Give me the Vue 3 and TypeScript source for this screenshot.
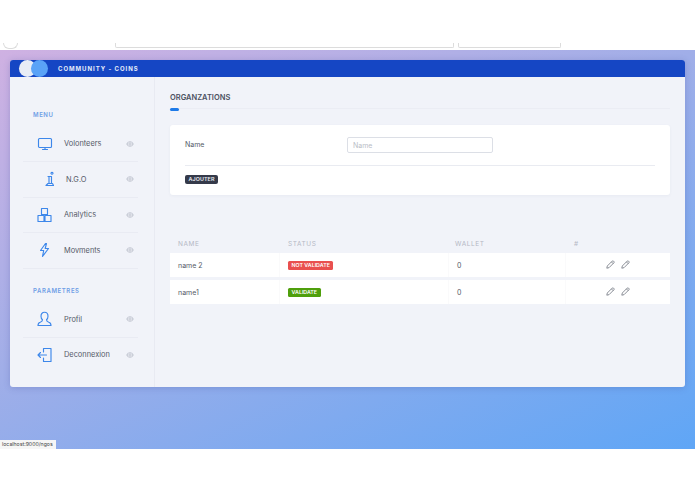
<template>
  <div class="page">
    <div class="chrome">
      <span class="round"></span>
      <span class="url"></span>
      <span class="tab"></span>
    </div>

    <div class="stage">
      <div class="panel">
        <header class="topbar">
          <span class="dot light"></span>
          <span class="dot blue"></span>
          <span class="brand">COMMUNITY - COINS</span>
        </header>

        <div class="body">
          <aside class="side">
            <div class="group first">MENU</div>
            <div class="item" v-for="it in menu" :key="it.label" :class="{ shifted: it.shifted }">
              <svg class="ico" width="18" height="16" viewBox="0 0 18 16"><path :d="it.d" /></svg>
              <span class="label">{{ it.label }}</span>
              <svg class="eye" width="8" height="6" viewBox="0 0 8 6">
                <ellipse cx="4" cy="3" rx="3" ry="2.3" />
                <path d="M.5 3h7M4 .7v4.6" />
              </svg>
            </div>
            <div class="group">PARAMETRES</div>
            <div class="item" v-for="it in settings" :key="it.label">
              <svg class="ico" width="18" height="16" viewBox="0 0 18 16"><path :d="it.d" /></svg>
              <span class="label">{{ it.label }}</span>
              <svg class="eye" width="8" height="6" viewBox="0 0 8 6">
                <ellipse cx="4" cy="3" rx="3" ry="2.3" />
                <path d="M.5 3h7M4 .7v4.6" />
              </svg>
            </div>
          </aside>

          <main class="main">
            <h2 class="title">ORGANZATIONS</h2>
            <div class="rule"><span class="accent"></span></div>

            <section class="card">
              <div class="field">
                <label class="field-name">Name</label>
                <input class="input" type="text" placeholder="Name" />
              </div>
              <div class="actions">
                <button class="add" type="button">AJOUTER</button>
              </div>
            </section>

            <div class="thead">
              <span>NAME</span>
              <span>STATUS</span>
              <span class="wallet-head">WALLET</span>
              <span>#</span>
            </div>
            <div class="row" v-for="org in orgs" :key="org.name">
              <div class="cell">{{ org.name }}</div>
              <div class="cell">
                <span class="badge" :class="org.ok ? 'ok' : 'ko'">{{ org.status }}</span>
              </div>
              <div class="cell">{{ org.wallet }}</div>
              <div class="cell tools">
                <svg v-for="n in 2" :key="n" width="9" height="9" viewBox="0 0 9 9">
                  <path d="M.8 8.2l.5-2.2L6.2 1.1c.4-.4 1-.4 1.3 0l.4.4c.4.4.4.9 0 1.3L3 7.7zM5.4 1.9l1.700 1.700" />
                </svg>
              </div>
            </div>
          </main>
        </div>
      </div>
      <div class="status">localhost:9000/ngos</div>
    </div>

    <div class="foot"></div>
  </div>
</template>

<script setup lang="ts">
interface NavItem {
  label: string;
  d: string;
  shifted?: boolean;
}

interface Org {
  name: string;
  status: string;
  ok: boolean;
  wallet: number;
}

const menu: NavItem[] = [
  { label: 'Volonteers', d: 'M2.500 2.500h11a1 1 0 0 1 1 1v7a1 1 0 0 1-1 1h-11a1 1 0 0 1-1-1v-7a1 1 0 0 1 1-1zM8 11.500v2M5.500 13.500h5' },
  {
    label: 'N.G.O',
    shifted: true,
    d: 'M15 1.300a1 1 0 1 1-.01 0zM11 5.500h3.500v7M12 6v6.500M11 12.500h4.500l1 2h-7.500z'
  },
  { label: 'Analytics', d: 'M4.500 1.500h6v6h-6zM1 8.500h6v6H1zM8 8.500h6v6H8z' },
  { label: 'Movments', d: 'M8.500 1.500L3.500 8.500h3.200L5.500 14.500l6-8H8.200L9.500 1.500z' }
];

const settings: NavItem[] = [
  {
    label: 'Profil',
    d: 'M7.500 1.200c2 0 3.500 1.700 3.500 4 0 1.500-.6 2.800-1.500 3.600 0 1.500.8 2 2.300 2.500 1.500.4 2.200 1.400 2.200 3.200H1c0-1.800.7-2.800 2.200-3.200 1.500-.5 2.300-1 2.300-2.500C4.600 8 4 6.700 4 5.200c0-2.300 1.500-4 3.500-4z'
  },
  { label: 'Deconnexion', d: 'M6.500 5V1.500h7.500v13H6.500V11M1 8h8.500M3.500 5.500L1 8l2.500 2.500' }
];

const orgs: Org[] = [
  { name: 'name 2', status: 'NOT VALIDATE', ok: false, wallet: 0 },
  { name: 'name1', status: 'VALIDATE', ok: true, wallet: 0 }
];
</script>

<style>
html,
body {
  margin: 0;
  background: #fff;
}
</style>

<style scoped>
.page {
  width: 695px;
  height: 494px;
  overflow: hidden;
  display: flex;
  flex-direction: column;
  font-family: Inter, "Liberation Sans", sans-serif;
  color: #4a4f5c;
}

.chrome {
  height: 50px;
  flex: none;
  box-sizing: border-box;
  padding-top: 43px;
  display: flex;
  align-items: flex-start;
  overflow: hidden;
  background: #fff;
}

.chrome span {
  display: block;
  background: #fff;
  border: 1px solid #dcdcdc;
  border-top: none;
}

.round {
  width: 13px;
  height: 5px;
  margin-left: 3px;
  border-radius: 0 0 7px 7px;
}

.url {
  width: 337px;
  height: 4px;
  margin-left: 97px;
  border-radius: 0 0 2px 2px;
}

.tab {
  width: 101px;
  height: 4px;
  margin-left: 4px;
  border-radius: 0 0 2px 2px;
}

.stage {
  position: relative;
  height: 399px;
  flex: none;
  padding: 10px 10px 0;
  box-sizing: border-box;
  background: linear-gradient(155deg, #cfb1e2 0%, #a0aee8 45%, #5fa6f6 100%);
}

.panel {
  height: 327px;
  display: flex;
  flex-direction: column;
  background: #f1f3f9;
  border-radius: 3px;
  overflow: hidden;
  box-shadow: 0 1px 6px rgba(60, 70, 150, 0.25);
}

.topbar {
  height: 17px;
  flex: none;
  display: flex;
  align-items: center;
  padding-left: 9px;
  background: #1546c4;
}

.dot {
  width: 17px;
  height: 17px;
  border-radius: 50%;
}

.light {
  background: #e8edf6;
}

.blue {
  background: #5aa3f7;
  margin-left: -5px;
}

.brand {
  margin-left: 10px;
  font-size: 6px;
  font-weight: 700;
  letter-spacing: 0.97px;
  color: #e6ecfa;
}

.body {
  flex: 1;
  display: flex;
  min-height: 0;
}

.side {
  width: 145px;
  flex: none;
  box-sizing: border-box;
  padding: 0 16px 0 13px;
  border-right: 1px solid #e8eaf2;
}

.group {
  height: 10px;
  line-height: 10px;
  margin: 17px 0 6.5px 10px;
  font-size: 6px;
  font-weight: 600;
  letter-spacing: 0.6px;
  color: #6f9ee6;
}

.group.first {
  margin-top: 33px;
  margin-bottom: 6.5px;
}

.item {
  height: 35.5px;
  display: flex;
  align-items: center;
  box-sizing: border-box;
  padding-left: 14px;
  border-bottom: 1px solid #e9ebf3;
}

.item:last-child {
  border-bottom-color: transparent;
}

.ico {
  flex: none;
  fill: none;
  stroke: #3d87ea;
  stroke-width: 1.15;
  stroke-linejoin: round;
  stroke-linecap: round;
}

.label {
  flex: 1;
  margin-left: 9px;
  font-size: 7.4px;
  color: #555a68;
}

.shifted .label {
  margin-left: 11px;
}

.eye {
  flex: none;
  margin-right: 4px;
  fill: none;
  stroke: #b9bdc8;
  stroke-width: 0.7;
}

.main {
  flex: 1;
  min-width: 0;
  padding: 0 15px;
}

.title {
  margin: 15px 0 0;
  height: 11px;
  line-height: 11px;
  font-size: 7.5px;
  font-weight: 600;
  color: #4b5060;
}

.rule {
  height: 1px;
  margin-top: 5px;
  background: #ebedf4;
}

.accent {
  display: block;
  width: 9px;
  height: 3px;
  background: #1d7ae8;
  border-radius: 2px;
}

.card {
  margin-top: 16px;
  height: 70px;
  box-sizing: border-box;
  padding: 12px 15px 0;
  background: #fff;
  border-radius: 3px;
  box-shadow: 0 1px 3px rgba(90, 100, 140, 0.06);
}

.field {
  display: flex;
  align-items: center;
  height: 16px;
  padding-bottom: 12px;
  border-bottom: 1px solid #e9ebf1;
}

.field-name {
  width: 162px;
  padding-bottom: 2px;
  font-size: 7px;
  color: #555a68;
}

.input {
  width: 146px;
  height: 16px;
  box-sizing: border-box;
  padding: 0 5px;
  border: 1px solid #dcdfe6;
  border-radius: 2px;
  font: 7px Inter, "Liberation Sans", sans-serif;
  outline: none;
}

.input::placeholder {
  color: #b9bdc6;
}

.actions {
  padding-top: 9px;
}

.add {
  display: block;
  width: 33px;
  height: 9px;
  padding: 0;
  border: none;
  border-radius: 2px;
  background: #353a4a;
  color: #e8eaf0;
  font: 600 5.4px/9px Inter, "Liberation Sans", sans-serif;
  letter-spacing: 0.1px;
}

.thead,
.row {
  display: grid;
  grid-template-columns: 110px 169px 117px 104px;
}

.thead {
  margin: 41px 0 2px;
  height: 15px;
  align-items: center;
  font-size: 6.5px;
  letter-spacing: 0.6px;
  color: #b4b8c4;
}

.thead span {
  padding-left: 8px;
}

.thead .wallet-head {
  padding-left: 6px;
}

.row {
  height: 24px;
  margin-bottom: 3px;
  background: #fff;
}

.cell {
  display: flex;
  align-items: center;
  padding-left: 8px;
  font-size: 7px;
  color: #555a68;
  border-right: 1px solid #fafafb;
}

.cell:last-child {
  border-right: none;
}

.badge {
  height: 9px;
  line-height: 9px;
  padding: 0 3.6px;
  border-radius: 1.500px;
  font-size: 5.3px;
  font-weight: 600;
  color: #fff;
}

.ko {
  background: #e9504f;
}

.ok {
  background: #4f9f0c;
}

.tools {
  justify-content: center;
  gap: 6px;
  padding: 0 0 2px;
}

.tools svg {
  fill: none;
  stroke: #6f737d;
  stroke-width: 0.8;
}

.status {
  position: absolute;
  left: 0;
  bottom: 0;
  width: 56px;
  height: 9px;
  line-height: 9px;
  padding-left: 2px;
  box-sizing: border-box;
  background: #f6f6f6;
  font-size: 5.2px;
  color: #444;
  white-space: nowrap;
}

.foot {
  flex: 1;
  background: #fff;
}
</style>
